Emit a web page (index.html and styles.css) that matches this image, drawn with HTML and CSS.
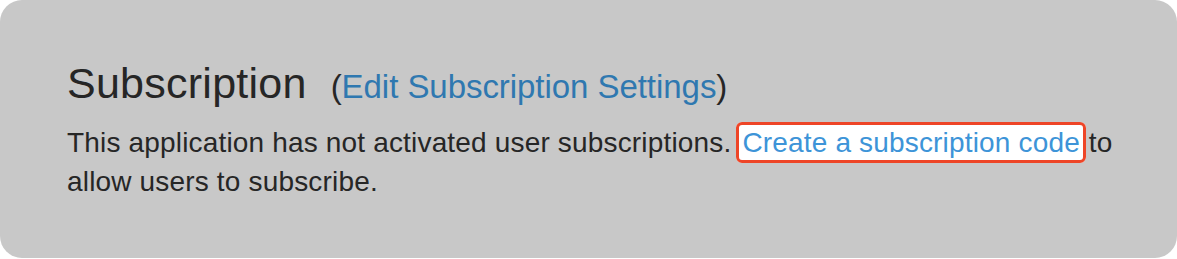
FILE: index.html
```html
<!DOCTYPE html>
<html lang="en">
  <head>
    <meta charset="UTF-8" />
    <meta name="viewport" content="width=device-width, initial-scale=1.0" />
    <title>Subscription</title>
    <link rel="stylesheet" href="styles.css">
  </head>
  <body>
    <div class="panel">
      <h2 class="judul">
        Subscription<a class="edit" href="#">(<span class="biru">Edit Subscription Settings</span>)</a>
      </h2>
      <p class="teks">
        This application has not activated user subscriptions.
        <a class="sorot" href="#">Create a subscription code</a> to allow users to subscribe.
      </p>
    </div>
  </body>
</html>
```

FILE: styles.css
```css
body {
  margin: 0;
  background-color: #fff;
  font-family: "Liberation Sans", Arial, sans-serif;
  color: #262626;
}
.panel {
  box-sizing: border-box;
  height: 258px;
  background-color: #c8c8c8;
  border-radius: 22px;
  padding: 59px 60px 0 67px;
}
.judul {
  margin: 0;
  font-size: 43px;
  font-weight: normal;
  line-height: 1.117;
  letter-spacing: 0.25px;
}
.edit {
  margin-left: 24px;
  font-size: 33px;
  letter-spacing: -0.05px;
  color: #262626;
  text-decoration: none;
}
.biru {
  color: #2f78b0;
}
.teks {
  margin: 16px 0 0 0;
  font-size: 28px;
  line-height: 39px;
  letter-spacing: 0.17px;
}
.sorot {
  color: #3d94d8;
  text-decoration: none;
  background-color: #fff;
  border: 3px solid #ee4527;
  border-radius: 6px;
  padding: 2px 3px;
  margin: 0 -5px 0 -3px;
}
```
